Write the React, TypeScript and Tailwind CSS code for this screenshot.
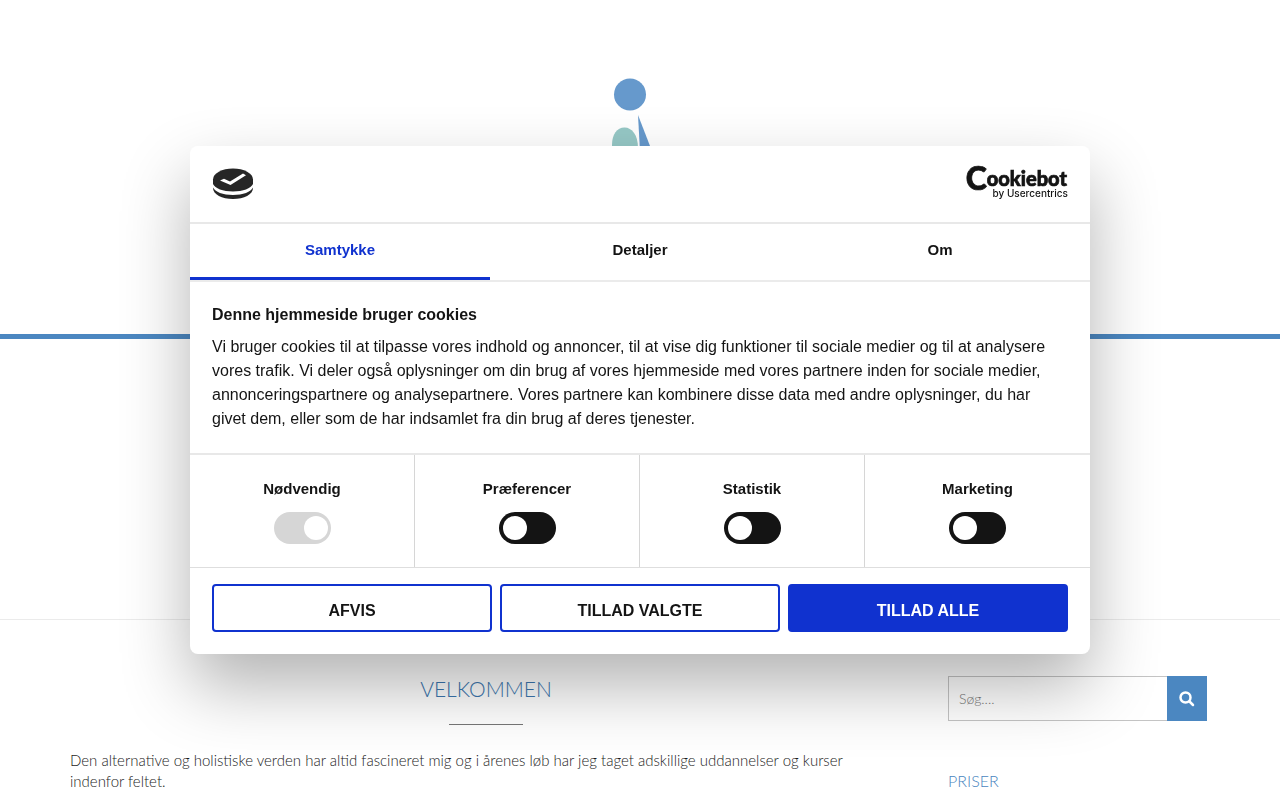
import React from "react";

const bodyText =
  "Vi bruger cookies til at tilpasse vores indhold og annoncer, til at vise dig funktioner til sociale medier og til at analysere vores trafik. Vi deler også oplysninger om din brug af vores hjemmeside med vores partnere inden for sociale medier, annonceringspartnere og analysepartnere. Vores partnere kan kombinere disse data med andre oplysninger, du har givet dem, eller som de har indsamlet fra din brug af deres tjenester.";

const categories = [
  { id: "necessary", label: "Nødvendig", locked: true },
  { id: "preferences", label: "Præferencer", locked: false },
  { id: "statistics", label: "Statistik", locked: false },
  { id: "marketing", label: "Marketing", locked: false },
];

function SiteLogo() {
  return (
    <svg width="60" height="160" viewBox="0 0 60 160" aria-hidden="true">
      <circle cx="30" cy="16.5" r="16" fill="#6699cc" />
      <path d="M12 76V67C12 56 17 49.500 24.500 49.500C32 49.500 38 57 38 70V110H12Z" fill="#96c8c6" />
      <path d="M38 37L50 68L58 94L42 110Z" fill="#6699cc" />
    </svg>
  );
}

function CookieMark() {
  return (
    <svg width="42" height="32" viewBox="0 0 42 32" aria-hidden="true">
      <path d="M1 11V20C1 26.500 10 31 21 31S41 26.500 41 20V11Z" fill="#262626" />
      <path d="M1 16C3 20.500 11 23.500 21 23.500S39 20.500 41 16V19.500C39 24 31 27 21 27S3 24 1 19.500Z" fill="#fff" />
      <ellipse cx="21" cy="11.500" rx="20" ry="11" fill="#262626" />
      <path d="M8 12.500L12 10.800L18 13.500L31 5.500L34 7.200L18.500 17Z" fill="#fff" />
    </svg>
  );
}

function CookiebotLogo() {
  return (
    <svg width="112" height="52" viewBox="0 0 112 52" role="img" aria-label="Cookiebot by Usercentrics" fill="#141414">
      <text x="111" y="32" textAnchor="end" fontFamily="Lato, sans-serif" fontWeight="900" fontSize="20" stroke="#141414" strokeWidth="0.7">
        <tspan fontSize="32">C</tspan>
        <tspan dy="-4">ookiebot</tspan>
      </text>
      <text x="112" y="39" textAnchor="end" fontFamily="Inter, sans-serif" fontWeight="500" fontSize="10">by Usercentrics</text>
    </svg>
  );
}

function CookieDialog() {
  return (
    <div className="pointer-events-none fixed inset-0 flex items-center justify-center font-['Liberation_Sans',sans-serif] text-[#141414]">
      <section role="dialog" aria-labelledby="cookie-title" className="pointer-events-auto w-full max-w-[900px] overflow-hidden rounded-lg bg-white shadow-[0_32px_68px_rgba(0,0,0,0.3)]">
        <header className="flex h-[78px] items-center justify-between border-b-2 border-[#e8e8e8] px-[22px]">
          <CookieMark />
          <CookiebotLogo />
        </header>
        <div role="tablist" className="grid grid-cols-3 border-b-2 border-[#ebebeb] text-[15px] font-bold">
          <button role="tab" aria-selected="true" className="h-14 border-b-[3px] border-[#1032cf] text-[#1032cf]">Samtykke</button>
          <button role="tab" aria-selected="false" className="h-14 border-b-[3px] border-transparent">Detaljer</button>
          <button role="tab" aria-selected="false" className="h-14 border-b-[3px] border-transparent">Om</button>
        </div>
        <div className="border-b-2 border-[#e8e8e8] px-[22px] pt-[21px] pb-[22px] text-base leading-6">
          <h2 id="cookie-title" className="mb-2 font-bold">Denne hjemmeside bruger cookies</h2>
          <p>{bodyText}</p>
        </div>
        <div className="grid grid-cols-4 divide-x divide-[#d6d6d6] border-b border-[#dedede]">
          {categories.map((c) => (
            <label key={c.id} htmlFor={c.id} className="flex flex-col items-center gap-[13px] py-[23px] text-[15px] leading-[21px] font-bold">
              {c.label}
              <span className="relative flex h-8 w-[57px]">
                <input
                  id={c.id}
                  type="checkbox"
                  role="switch"
                  defaultChecked={c.locked}
                  disabled={c.locked}
                  className="peer h-8 w-[57px] appearance-none rounded-full bg-[#141414] disabled:bg-[#d6d6d6]"
                />
                <span className="pointer-events-none absolute top-1 left-1 size-6 rounded-full bg-white peer-checked:left-[30px]" />
              </span>
            </label>
          ))}
        </div>
        <div className="grid grid-cols-3 gap-2 px-[22px] pt-4 pb-[22px] text-base font-bold">
          <button className="h-12 rounded-sm border-2 border-[#1032cf] pt-[5px]">AFVIS</button>
          <button className="h-12 rounded-sm border-2 border-[#1032cf] pt-[5px]">TILLAD VALGTE</button>
          <button className="h-12 rounded-sm border-2 border-[#1032cf] bg-[#1032cf] pt-[5px] text-white">TILLAD ALLE</button>
        </div>
      </section>
    </div>
  );
}

export default function App() {
  return (
    <div className="h-screen overflow-hidden bg-white font-[Lato,sans-serif] font-light text-[#1c1c1c]">
      <header className="flex h-[339px] justify-center border-b-[5px] border-[#4b87c1] pt-[78px] pr-5">
        <SiteLogo />
      </header>
      <div className="h-[281px] border-b border-[#ebebeb]" />
      <main className="mx-auto flex max-w-[1140px] justify-between">
        <article className="w-[832px] pt-14">
          <h1 className="text-center text-[21px] leading-[26px] text-[#3c77b0]">VELKOMMEN</h1>
          <hr className="mx-auto mt-[22px] w-[74px] border-[#777]" />
          <p className="mt-[25px] pr-8 text-[15px] leading-[21px]">
            Den alternative og holistiske verden har altid fascineret mig og i årenes løb har jeg taget adskillige uddannelser og kurser indenfor feltet.
          </p>
        </article>
        <aside className="mr-[3px] w-[259px] pt-14">
          <form role="search" className="flex h-[45px]">
            <input type="search" aria-label="Søg" placeholder="Søg...." className="min-w-0 flex-1 border border-r-0 border-[#c4c4c4] px-[10px] text-sm placeholder:text-[#777]" />
            <button type="button" aria-label="Søg" className="flex w-10 items-center justify-center bg-[#4b87c1] text-white">
              <svg width="16" height="16" viewBox="0 0 16 16" fill="none" stroke="currentColor" aria-hidden="true">
                <circle cx="6.500" cy="6.500" r="5" strokeWidth="2.500" />
                <path d="M10.500 10.500L14 14" strokeWidth="2.500" strokeLinecap="round" />
              </svg>
            </button>
          </form>
          <h2 className="mt-12 text-base leading-6 text-[#4a86c0]">PRISER</h2>
        </aside>
      </main>
      <CookieDialog />
    </div>
  );
}
